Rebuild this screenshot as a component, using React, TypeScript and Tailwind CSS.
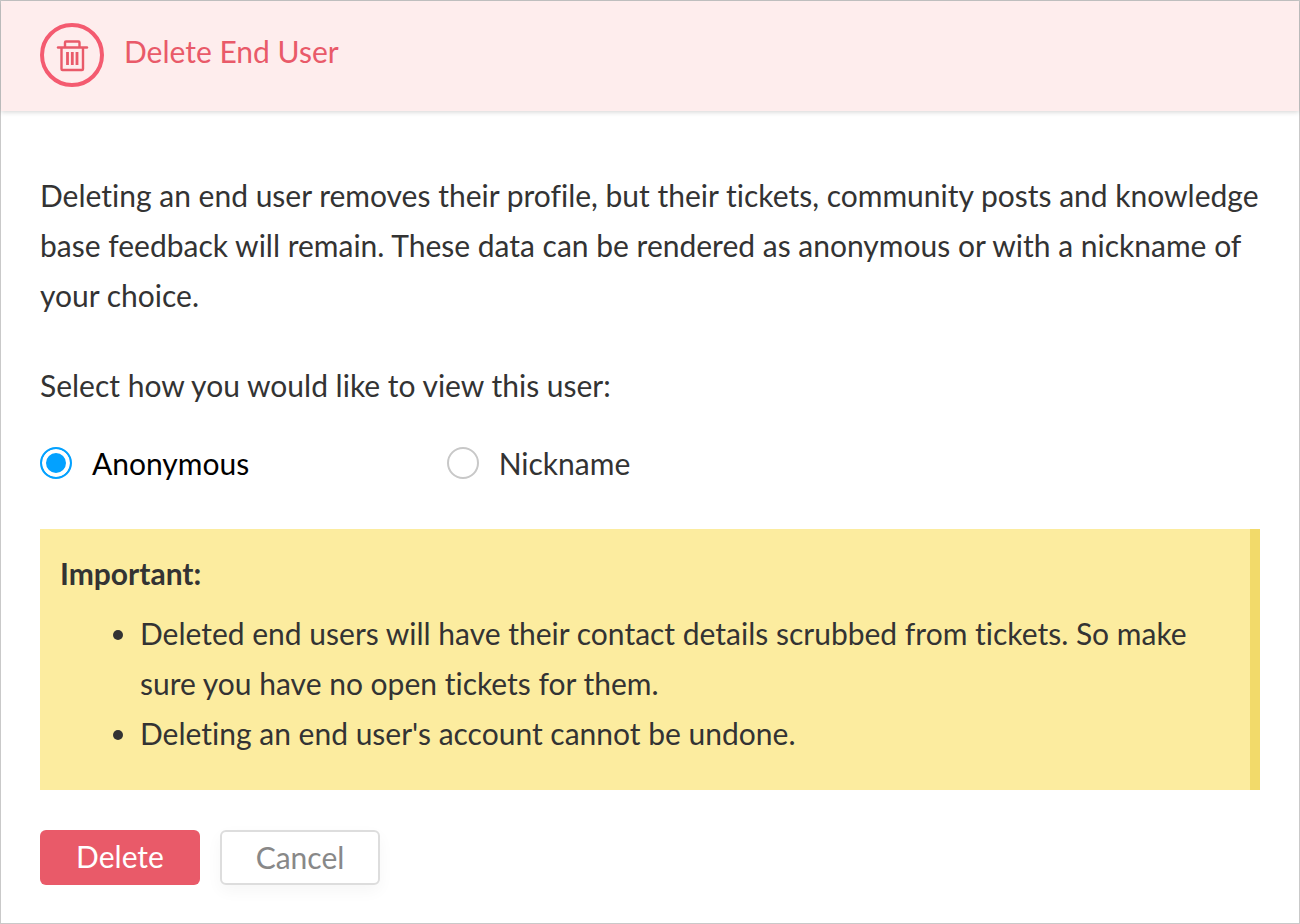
import React, { useState } from "react";

const viewOptions = [
  { value: "anonymous", label: "Anonymous" },
  { value: "nickname", label: "Nickname" },
];

const warnings = [
  "Deleted end users will have their contact details scrubbed from tickets. So make sure you have no open tickets for them.",
  "Deleting an end user's account cannot be undone.",
];

function TrashBadge() {
  return (
    <svg viewBox="0 0 64 64" className="w-16 h-16 shrink-0" fill="none" aria-hidden="true">
      <circle cx="32" cy="32" r="30" stroke="#f45b70" strokeWidth="4" />
      <g stroke="#e95a69" strokeWidth="2.4">
        <path d="M18 24.5H47" strokeLinecap="round" />
        <path d="M25 24V19.5Q25 18.5 26 18.5H38.5Q39.5 18.5 39.5 19.5V24" />
        <path d="M21.5 25V46Q21.5 47 22.5 47H42Q43 47 43 46V25" />
        <path d="M27.5 29V42M32.3 29V42M37 29V42" strokeWidth="2.8" />
      </g>
    </svg>
  );
}

export default function App() {
  const [view, setView] = useState("anonymous");

  return (
    <main className="min-h-screen bg-white border border-[#c9c9c9] font-['Lato',sans-serif] [font-variant-ligatures:none] text-[30px] leading-[50px] text-[#333]">
      <header className="flex items-start gap-5 px-[39px] pt-[22px] pb-6 bg-[#feeded] shadow-[0_1px_5px_rgba(0,0,0,0.18)]">
        <TrashBadge />
        <h1 className="pt-[3px] text-[#e95a69]">Delete End User</h1>
      </header>

      <form className="px-[39px] pt-[59px] pb-9" onSubmit={(e) => e.preventDefault()}>
        <p>
          Deleting an end user removes their profile, but their tickets, community posts and knowledge
          base feedback will remain. These data can be rendered as anonymous or with a nickname of
          your choice.
        </p>

        <fieldset className="mt-10">
          <legend>Select how you would like to view this user:</legend>
          <div className="grid grid-cols-3 pt-7">
            {viewOptions.map((option) => (
              <label key={option.value} className="flex items-center gap-5 cursor-pointer text-[#333] has-checked:text-black">
                <input
                  type="radio"
                  name="view"
                  value={option.value}
                  checked={view === option.value}
                  onChange={() => setView(option.value)}
                  className="appearance-none w-8 h-8 shrink-0 rounded-full border-2 border-[#c8c8c8] bg-white checked:border-[#03a1ff] checked:bg-[#03a1ff] checked:shadow-[inset_0_0_0_4px_#fff]"
                />
                {option.label}
              </label>
            ))}
          </div>
        </fieldset>

        <section className="mt-[41px] px-5 pt-[19px] pb-8 bg-[#fcec9f] border-r-10 border-[#f2da6a]">
          <h2 className="font-bold">Important:</h2>
          <ul className="mt-[10px] pl-20 list-disc">
            {warnings.map((text) => (
              <li key={text}>{text}</li>
            ))}
          </ul>
        </section>

        <div className="flex gap-5 mt-10">
          <button type="submit" className="w-40 h-[55px] pb-[3px] rounded-md bg-[#e95a69] text-white">
            Delete
          </button>
          <button type="button" className="w-40 h-[55px] pb-[3px] rounded-md border-2 border-[#ddd] bg-white text-[#888] shadow-[0_6px_16px_rgba(0,0,0,0.04)]">
            Cancel
          </button>
        </div>
      </form>
    </main>
  );
}
